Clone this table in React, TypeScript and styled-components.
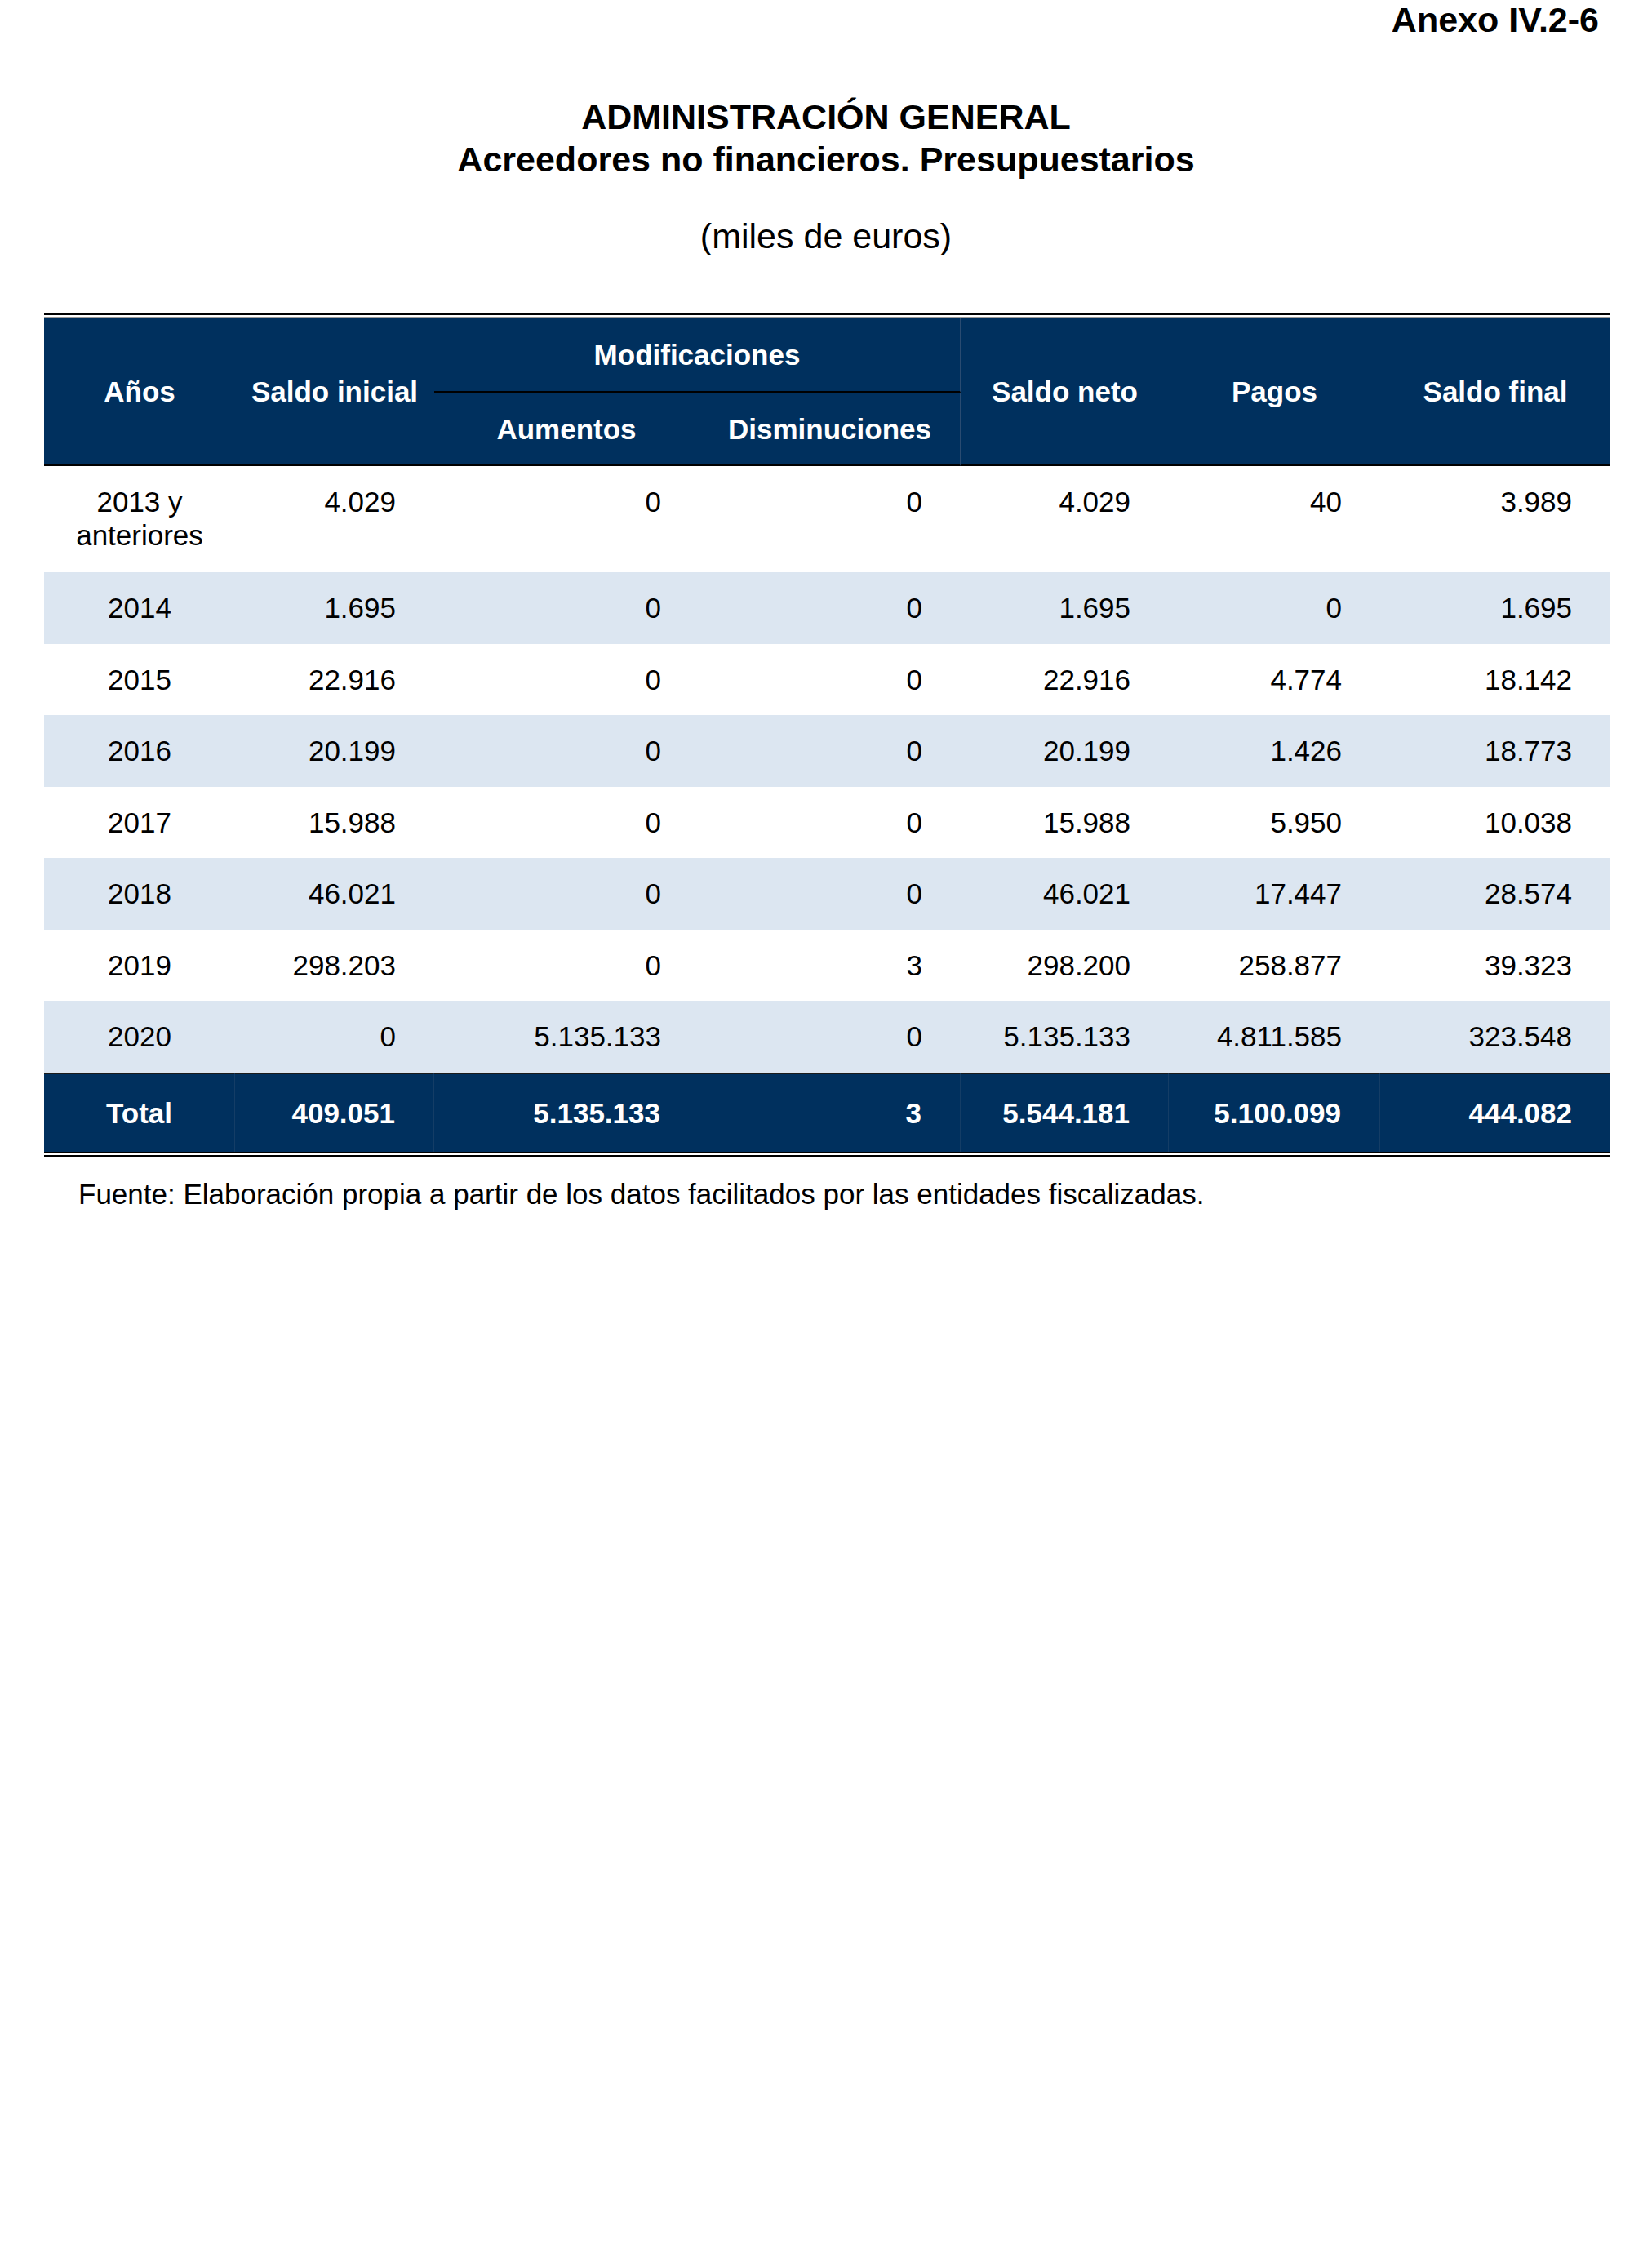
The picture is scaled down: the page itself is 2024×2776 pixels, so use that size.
import React from "react";
import styled, { createGlobalStyle } from "styled-components";

const GlobalStyle = createGlobalStyle`
  html, body {
    margin: 0;
    padding: 0;
    background: #ffffff;
  }
  body {
    font-family: "Liberation Sans", Arial, Helvetica, sans-serif;
    color: #000000;
  }
`;

const NAVY = "#00305e";
const STRIPE = "#dce6f1";

const Page = styled.div`
  width: 2024px;
  min-height: 2776px;
  display: flex;
  flex-direction: column;
  box-sizing: border-box;
`;

const Annex = styled.div`
  align-self: flex-end;
  padding-right: 65px;
  font-size: 43px;
  line-height: 48px;
  font-weight: 700;
`;

const Title = styled.h1`
  margin: 69px 0 0;
  text-align: center;
  font-size: 43px;
  line-height: 52px;
  font-weight: 700;
`;

const Subtitle = styled.p`
  margin: 42px 0 0;
  text-align: center;
  font-size: 43px;
  line-height: 52px;
  font-weight: 400;
`;

const TableFrame = styled.div`
  margin: 69px 0 0 54px;
  width: 1919px;
  border-top: 2px solid #000000;
  padding-top: 2px;
`;

const Table = styled.table`
  width: 100%;
  table-layout: fixed;
  border-collapse: separate;
  border-spacing: 0;
  border-top: 1px solid #9a9a9a;
  border-bottom: 6px double #000000;
  font-size: 35px;
`;

const HeadRow = styled.tr<{ $height: number }>`
  height: ${(p) => p.$height}px;
`;

const HeadCell = styled.th<{ $divider?: boolean; $rule?: boolean }>`
  background: ${NAVY};
  color: #ffffff;
  font-weight: 700;
  font-size: 35px;
  line-height: 41px;
  text-align: center;
  vertical-align: middle;
  padding: 0;
  white-space: nowrap;
  border-right: ${(p) => (p.$divider ? "1px solid #2a4b71" : "0")};
  border-bottom: ${(p) => (p.$rule ? "2px solid #000000" : "0")};
`;

const BodyRow = styled.tr<{ $shaded: boolean; $height: number }>`
  height: ${(p) => p.$height}px;
  background: ${(p) => (p.$shaded ? STRIPE : "#ffffff")};
`;

const BodyCell = styled.td<{ $year?: boolean }>`
  padding: 23px ${(p) => (p.$year ? "0" : "47px")} 0 0;
  vertical-align: top;
  text-align: ${(p) => (p.$year ? "center" : "right")};
  font-size: 35px;
  line-height: 41px;
  font-weight: 400;
  color: #000000;
`;

const TotalRow = styled.tr`
  height: 97px;
`;

const TotalCell = styled.td<{ $year?: boolean; $divider?: boolean }>`
  background: ${NAVY};
  color: #ffffff;
  font-weight: 700;
  font-size: 35px;
  line-height: 41px;
  vertical-align: middle;
  text-align: ${(p) => (p.$year ? "center" : "right")};
  padding: 0 ${(p) => (p.$year ? "0" : "47px")} 0 0;
  border-top: 2px solid #1b1b1b;
  border-right: ${(p) => (p.$divider ? "1px solid #143d66" : "0")};
`;

const Source = styled.p`
  margin: 25px 0 0;
  padding-left: 96px;
  font-size: 35px;
  line-height: 41px;
`;

type Row = { year: React.ReactNode; values: string[] };

const rows: Row[] = [
  {
    year: (
      <>
        2013 y
        <br />
        anteriores
      </>
    ),
    values: ["4.029", "0", "0", "4.029", "40", "3.989"],
  },
  { year: "2014", values: ["1.695", "0", "0", "1.695", "0", "1.695"] },
  { year: "2015", values: ["22.916", "0", "0", "22.916", "4.774", "18.142"] },
  { year: "2016", values: ["20.199", "0", "0", "20.199", "1.426", "18.773"] },
  { year: "2017", values: ["15.988", "0", "0", "15.988", "5.950", "10.038"] },
  { year: "2018", values: ["46.021", "0", "0", "46.021", "17.447", "28.574"] },
  { year: "2019", values: ["298.203", "0", "3", "298.200", "258.877", "39.323"] },
  { year: "2020", values: ["0", "5.135.133", "0", "5.135.133", "4.811.585", "323.548"] },
];

const totals = ["409.051", "5.135.133", "3", "5.544.181", "5.100.099", "444.082"];

const colWidths = [234, 244, 325, 320, 255, 259, 282];

export default function App() {
  return (
    <>
      <GlobalStyle />
      <Page>
        <Annex>Anexo IV.2-6</Annex>
        <Title>
          ADMINISTRACIÓN GENERAL
          <br />
          Acreedores no financieros. Presupuestarios
        </Title>
        <Subtitle>(miles de euros)</Subtitle>
        <TableFrame>
          <Table>
            <colgroup>
              {colWidths.map((w, i) => (
                <col key={i} style={{ width: w }} />
              ))}
            </colgroup>
            <thead>
              <HeadRow $height={92}>
                <HeadCell rowSpan={2} $rule>
                  Años
                </HeadCell>
                <HeadCell rowSpan={2} $rule>
                  Saldo inicial
                </HeadCell>
                <HeadCell colSpan={2} $rule $divider>
                  Modificaciones
                </HeadCell>
                <HeadCell rowSpan={2} $rule>
                  Saldo neto
                </HeadCell>
                <HeadCell rowSpan={2} $rule>
                  Pagos
                </HeadCell>
                <HeadCell rowSpan={2} $rule>
                  Saldo final
                </HeadCell>
              </HeadRow>
              <HeadRow $height={90}>
                <HeadCell $rule $divider>
                  Aumentos
                </HeadCell>
                <HeadCell $rule $divider>
                  Disminuciones
                </HeadCell>
              </HeadRow>
            </thead>
            <tbody>
              {rows.map((r, i) => (
                <BodyRow key={i} $shaded={i % 2 === 1} $height={i === 0 ? 130 : 87.57}>
                  <BodyCell $year>{r.year}</BodyCell>
                  {r.values.map((v, j) => (
                    <BodyCell key={j}>{v}</BodyCell>
                  ))}
                </BodyRow>
              ))}
              <TotalRow>
                <TotalCell $year $divider>
                  Total
                </TotalCell>
                {totals.map((v, j) => (
                  <TotalCell key={j} $divider={j < 5}>
                    {v}
                  </TotalCell>
                ))}
              </TotalRow>
            </tbody>
          </Table>
        </TableFrame>
        <Source>
          Fuente: Elaboración propia a partir de los datos facilitados por las entidades fiscalizadas.
        </Source>
      </Page>
    </>
  );
}
